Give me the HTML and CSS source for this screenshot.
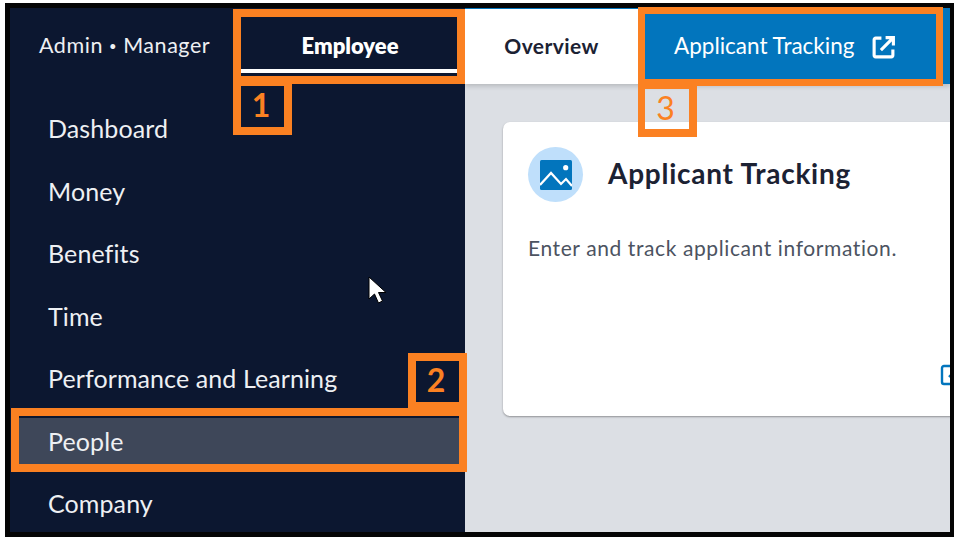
FILE: index.html
```html
<!DOCTYPE html>
<html lang="en">
<head>
<meta charset="utf-8">
<title>Applicant Tracking</title>
<link rel="stylesheet" href="styles.css">
</head>
<body>
<div class="frame">
  <div class="app">
    <aside class="sidebar">
      <div class="side-head">
        <div class="role">Admin <span class="dot">•</span> Manager</div>
        <div class="tab-employee">Employee</div>
      </div>
      <nav class="nav">
        <a class="nav-item">Dashboard</a>
        <a class="nav-item">Money</a>
        <a class="nav-item">Benefits</a>
        <a class="nav-item">Time</a>
        <a class="nav-item">Performance and Learning</a>
        <a class="nav-item active">People</a>
        <a class="nav-item">Company</a>
      </nav>
    </aside>
    <main class="main">
      <div class="topbar">
        <div class="tab-overview">Overview</div>
        <div class="tab-link">
          <span>Applicant Tracking</span>
          <svg class="ext-icon" viewBox="0 0 24 24" fill="none" stroke="#fff" stroke-width="3"><path d="M10 3H4.500A1.500 1.500 0 0 0 3 4.500v15A1.500 1.500 0 0 0 4.500 21h15a1.500 1.500 0 0 0 1.500-1.500V14"/><path d="M9.500 14.500 21 3M14 2.500h7.500V10"/></svg>
        </div>
      </div>
      <div class="content">
        <section class="card">
          <div class="card-head">
            <div class="avatar">
              <svg viewBox="0 0 32 30" class="avatar-img"><rect width="32" height="30" rx="1.500" fill="#0275bd"/><circle cx="25.700" cy="7.700" r="2.600" fill="#fff"/><path fill="none" stroke="#fff" stroke-width="2.200" d="M0 25 11 13l10 11 5-5 6 7"/></svg>
            </div>
            <h2 class="card-title">Applicant Tracking</h2>
          </div>
          <p class="card-text">Enter and track applicant information.</p>
          <div class="card-foot">
            <svg class="foot-icon" viewBox="0 0 24 24" fill="none" stroke="#0275bd" stroke-width="2.400"><path d="M11 3H5a2 2 0 0 0-2 2v14a2 2 0 0 0 2 2h14a2 2 0 0 0 2-2v-6"/><path d="M10 14 21 3M14 3h7v7"/></svg>
          </div>
        </section>
      </div>
    </main>
  </div>

  <div class="mark mark-employee"></div>
  <div class="mark tag tag-1">1</div>
  <div class="mark tag tag-2">2</div>
  <div class="mark mark-people"></div>
  <div class="mark mark-link"></div>
  <div class="mark tag tag-3">3</div>
  <svg class="cursor" viewBox="0 0 20 30"><path d="M1 1v22l5.500-5 4 9 4-2-4-8.500H18z" fill="#fff" stroke="#000" stroke-width="1"/></svg>
</div>
</body>
</html>
```
FILE: styles.css
```css
* { box-sizing: border-box; }
html, body { margin: 0; padding: 0; background: #fff; }
body { font-family: "Lato", "Open Sans", sans-serif; }

.frame {
  position: relative;
  width: 949px;
  height: 534px;
  margin: 3px 0 0 5px;
  border: solid #050505;
  border-width: 5px 4px 5px 5px;
}
.app {
  display: flex;
  width: 100%;
  height: 100%;
  overflow: hidden;
}

.sidebar {
  flex: 0 0 455px;
  background: #0c1730;
  color: #eef0f3;
}
.side-head {
  display: flex;
  height: 76px;
}
.role {
  flex: 0 0 231px;
  padding: 22px 0 0 29px;
  font-size: 21.500px;
  line-height: 30px;
  letter-spacing: .55px;
  white-space: nowrap;
}
.dot { font-size: 13px; vertical-align: 2px; }
.tab-employee {
  flex: 0 0 217px;
  height: 65px;
  border-bottom: 4px solid #fff;
  padding: 23px 0 0 1px;
  text-align: center;
  font-size: 22px;
  line-height: 30px;
  font-weight: 800;
  color: #fff;
}
.nav {
  display: flex;
  flex-direction: column;
  gap: 14.500px;
  padding: 21px 0 0 9px;
}
.nav-item {
  height: 48px;
  padding-left: 29px;
  font-size: 25px;
  line-height: 47px;
  letter-spacing: .1px;
}
.nav-item.active { background: #3e4759; }

.main {
  flex: 1;
  min-width: 0;
  display: flex;
  flex-direction: column;
  background: #dcdfe4;
}
.topbar {
  flex: 0 0 76px;
  display: flex;
  border-top: 1px solid #0275bd;
  background: #fff;
  box-shadow: 0 2px 5px rgba(0, 0, 0, .18);
  position: relative;
}
.tab-overview {
  flex: 0 0 173px;
  text-align: center;
  padding-top: 22px;
  font-size: 21px;
  line-height: 30px;
  font-weight: 700;
  letter-spacing: .4px;
  color: #1c2233;
}
.tab-link {
  flex: 1;
  display: flex;
  align-items: flex-start;
  gap: 15px;
  padding: 22px 0 0 36px;
  background: #0275bd;
  color: #fff;
  font-size: 22.500px;
  line-height: 30px;
}
.ext-icon { width: 25px; height: 25px; margin: 4px 0 0 2px; }

.content { flex: 1; padding: 38px 0 0 38px; overflow: hidden; }
.card {
  width: 520px;
  height: 294px;
  padding: 25px;
  background: #fff;
  border-radius: 7px;
  box-shadow: 0 1px 2px rgba(0, 0, 0, .35);
  position: relative;
}
.card-head { display: flex; align-items: center; gap: 25px; }
.avatar {
  width: 55px;
  height: 55px;
  border-radius: 50%;
  background: #bfdffb;
  display: flex;
  align-items: center;
  justify-content: center;
}
.avatar-img { width: 32px; height: 30px; }
.card-title {
  margin: -3px 0 0;
  font-size: 28px;
  line-height: 40px;
  font-weight: 700;
  letter-spacing: .75px;
  color: #1c2233;
}
.card-text {
  margin: 31px 0 0;
  font-size: 21px;
  line-height: 30px;
  letter-spacing: .6px;
  color: #4c5361;
}
.card-foot { margin: 100px 0 0 411px; }
.foot-icon { width: 24px; height: 24px; display: block; }

.mark {
  position: absolute;
  border: 8px solid #fb8122;
}
.mark-employee { left: 223px; top: 1px; width: 232px; height: 75px; }
.mark-people { left: 1px; top: 400px; width: 456px; height: 64px; }
.mark-link { left: 628px; top: -1px; width: 305px; height: 79px; border-width: 7px; }
.tag {
  width: 59px;
  padding-right: 3px;
  color: #fb8122;
  font-size: 32px;
  font-weight: 700;
  line-height: 38px;
  text-align: center;
}
.tag-1 { left: 223px; top: 76px; height: 51px; border-top-width: 2px; }
.tag-2 { left: 398px; top: 345px; height: 55px; border-bottom-width: 6px; }
.tag-3 { left: 628px; top: 78px; height: 51px; border-top-width: 3px; border-left-width: 7px; font-weight: 400; }
.cursor { position: absolute; left: 358px; top: 268px; width: 20px; height: 30px; }
```
